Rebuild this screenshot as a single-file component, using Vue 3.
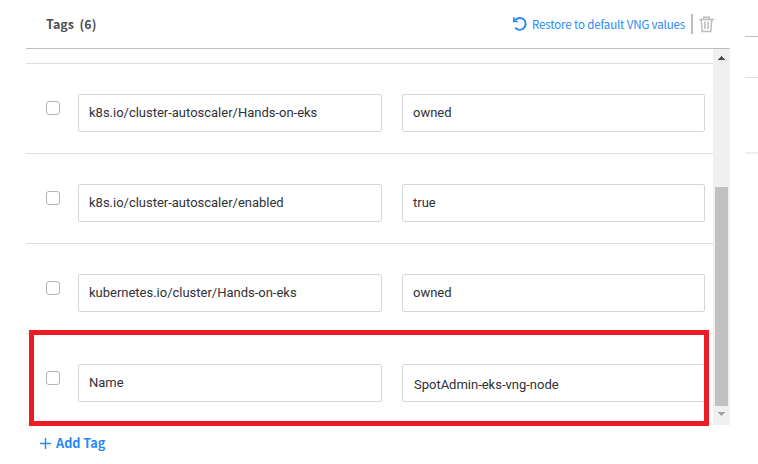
<script setup>
const tags = [
  { key: 'k8s.io/cluster-autoscaler/Hands-on-eks', value: 'owned' },
  { key: 'k8s.io/cluster-autoscaler/enabled', value: 'true' },
  { key: 'kubernetes.io/cluster/Hands-on-eks', value: 'owned' },
  { key: 'Name', value: 'SpotAdmin-eks-vng-node', highlighted: true },
]
</script>

<template>
  <div class="page">
    <section class="panel">
      <header class="head">
        <h2 class="title">Tags&nbsp; (6)</h2>
        <button class="restore">
          <svg class="restore-icon" width="14" height="16" viewBox="0 0 14 16">
            <path d="M2.2 4.2C4.4 1.3 8.6 1.2 11 3.6C13.4 6.1 13.2 10.3 10.4 12.5C7.9 14.5 4.4 14 2.3 11.6" fill="none" stroke="#2688fb" stroke-width="2" />
            <path d="M0 1.2L0 6.2L5.3 6.2L4.4 4.8L2 4.6L1.5 1.2Z" fill="#2688fb" />
          </svg>
          <span class="restore-text">Restore to default VNG values</span>
        </button>
        <span class="divider"></span>
        <svg class="trash" width="15" height="17" viewBox="0 0 15 17">
          <path d="M0 3.5H15M4.7 3V1.2H10.3V3M2.2 4L3.2 15.5H11.8L12.8 4" fill="none" stroke="#bdbdbd" stroke-width="1.5" />
          <path d="M5.9 5.5V13M9.1 5.5V13" fill="none" stroke="#bdbdbd" stroke-width="1.5" />
        </svg>
      </header>
      <div class="list">
        <div class="rows">
          <div v-for="tag in tags" :key="tag.key" class="row" :class="{ highlighted: tag.highlighted }">
            <span class="check"></span>
            <div class="field">{{ tag.key }}</div>
            <div class="field value">{{ tag.value }}</div>
          </div>
        </div>
        <div class="scrollbar">
          <svg class="arrow" width="7" height="4" viewBox="0 0 7 4" shape-rendering="crispEdges"><path d="M3 0H4V1H5V2H6V3H7V4H0V3H1V2H2V1H3Z" fill="#505050" /></svg>
          <span class="thumb"></span>
          <svg class="arrow" width="7" height="4" viewBox="0 0 7 4" shape-rendering="crispEdges"><path d="M0 0H7V1H6V2H5V3H4V4H3V3H2V2H1V1H0Z" fill="#a3a3a3" /></svg>
        </div>
      </div>
      <button class="add">
        <svg width="11" height="11" viewBox="0 0 11 11"><path d="M5.5 0V11M0 5.5H11" stroke="#2688fb" stroke-width="1.4" /></svg>
        <span class="add-text">Add Tag</span>
      </button>
    </section>
    <aside class="side">
      <span class="side-head"></span>
      <span class="side-row"></span>
      <span class="side-end"></span>
    </aside>
  </div>
</template>

<style>
body { background: #fff; overflow: hidden; }
</style>

<style scoped>
* { box-sizing: border-box; }
.page {
  display: flex;
  gap: 15px;
  width: 758px;
  height: 464px;
  padding-left: 26px;
  background: #fff;
  font-family: "Noto Sans CJK SC", "Open Sans", sans-serif;
}
.panel { width: 704px; }
.head {
  display: flex;
  align-items: center;
  height: 49px;
  padding: 0 16px 0 20px;
  border-bottom: 1px solid #bdbdbd;
}
.title {
  margin: 0 auto 0 0;
  font-size: 12.5px;
  line-height: 20px;
  font-weight: 700;
  color: #4f4f4f;
}
button {
  display: flex;
  align-items: center;
  padding: 0;
  border: 0;
  background: none;
  font-family: inherit;
  color: #2688fb;
}
.restore { gap: 5px; }
.restore-text {
  width: 153px;
  font-size: 11.5px;
  line-height: 20px;
  letter-spacing: -0.14px;
  text-align: left;
  white-space: nowrap;
}
.divider { width: 2px; height: 20px; margin: 0 6px; background: #bdbdbd; }
.trash { display: block; }
.list {
  display: flex;
  height: 376px;
  border-bottom: 2px solid #eee;
}
.rows { width: 687px; padding-top: 14px; }
.row {
  position: relative;
  display: flex;
  align-items: flex-start;
  height: 90px;
  padding: 30px 0 0 20px;
  border-top: 1px solid #dedede;
}
.check {
  width: 14px;
  height: 14px;
  margin: 7px 18px 0 0;
  border: 1px solid #b5b5b5;
  border-radius: 3px;
}
.field {
  width: 304px;
  height: 38px;
  padding: 0 10px;
  border: 1px solid #d6d6d8;
  border-radius: 2px;
  font-family: Roboto, sans-serif;
  font-size: 13px;
  line-height: 36px;
  letter-spacing: -0.01px;
  color: #303036;
  white-space: nowrap;
}
.value { width: 303px; margin-left: 20px; }
.highlighted .value { padding: 2px 0 0 11px; }
.highlighted::after {
  content: "";
  box-sizing: border-box;
  position: absolute;
  left: 3px;
  top: -4px;
  width: 680px;
  height: 96px;
  border: 5px solid #ed1c24;
}
.scrollbar {
  display: flex;
  flex-direction: column;
  align-items: center;
  width: 17px;
  height: 376px;
  padding: 7px 0 9px;
  background: #f0f0f0;
}
.arrow { display: block; }
.thumb { width: 13px; height: 219px; margin: auto 0 6px; background: #c1c1c1; }
.add { gap: 5px; margin: 8px 0 0 14px; }
.add-text { font-size: 12.7px; line-height: 20px; font-weight: 700; }
.side { display: flex; flex-direction: column; width: 13px; padding-top: 36px; }
.side-head { height: 1px; background: #bdbdbd; }
.side-row { height: 1px; margin-top: 40px; background: #dedede; }
.side-end { height: 2px; margin-top: 74px; background: #eee; }
</style>
